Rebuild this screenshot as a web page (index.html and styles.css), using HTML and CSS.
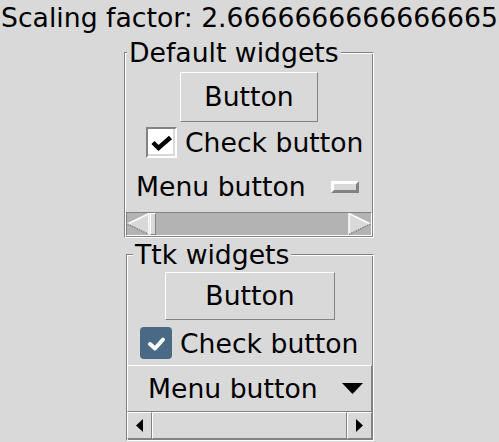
FILE: index.html
```html
<!DOCTYPE html>
<html>
  <head>
    <title>Scaling factor</title>
    <link rel="stylesheet" href="styles.css">
  </head>
  <body>
    <div class="title">Scaling factor: 2.6666666666666665</div>

    <fieldset class="group classic">
      <legend>Default widgets</legend>
      <div class="tk-button">Button</div>
      <div class="check-row">
        <span class="tk-check">
          <svg width="27" height="27" viewBox="0 0 27 27"><polyline points="5,13.5 10.5,19 22.5,8.5" fill="none" stroke="#000" stroke-width="4.5"/></svg>
        </span>
        <span>Check button</span>
      </div>
      <div class="menu-row">
        <span>Menu button</span>
        <span class="indicator"></span>
      </div>
      <div class="tk-scrollbar">
        <svg class="tk-arrow" width="23" height="22" viewBox="0 0 23 22">
          <polygon points="0.5,11 22,0.5 22,21.5" fill="#d9d9d9"/>
          <line x1="0.5" y1="11" x2="22" y2="0.5" stroke="#fff" stroke-width="1.5"/>
          <line x1="0.5" y1="11" x2="22" y2="21.5" stroke="#828282" stroke-width="1.5" stroke-dasharray="1.5 1"/>
          <line x1="22" y1="0" x2="22" y2="22" stroke="#fff" stroke-width="1.5"/>
        </svg>
        <span class="tk-slider"></span>
        <span class="tk-trough"></span>
        <svg class="tk-arrow" width="23" height="22" viewBox="0 0 23 22">
          <polygon points="1,0.5 22.5,11 1,21.5" fill="#d9d9d9"/>
          <line x1="1" y1="0" x2="1" y2="22" stroke="#fff" stroke-width="1.5"/>
          <line x1="1" y1="0.5" x2="22.5" y2="11" stroke="#fff" stroke-width="1.5"/>
          <line x1="22.5" y1="11" x2="1" y2="21.5" stroke="#828282" stroke-width="1.5" stroke-dasharray="1.5 1"/>
        </svg>
      </div>
    </fieldset>

    <fieldset class="group ttk">
      <legend>Ttk widgets</legend>
      <div class="ttk-button">Button</div>
      <div class="check-row ttk-check-row">
        <span class="ttk-check">
          <svg width="32" height="32" viewBox="0 0 32 32"><polyline points="10,17 15,21.5 23,12.5" fill="none" stroke="#fff" stroke-width="4" stroke-linecap="round" stroke-linejoin="round"/></svg>
        </span>
        <span>Check button</span>
      </div>
      <div class="ttk-menu">
        <span>Menu button</span>
        <svg width="21" height="11" viewBox="0 0 21 11"><polygon points="0,0 21,0 10.5,11" fill="#000"/></svg>
      </div>
      <div class="ttk-scrollbar">
        <span class="ttk-arrow">
          <svg width="7" height="13" viewBox="0 0 7 13"><polygon points="7,0 0,6.5 7,13" fill="#000"/></svg>
        </span>
        <span class="ttk-thumb"></span>
        <span class="ttk-arrow">
          <svg width="7" height="13" viewBox="0 0 7 13"><polygon points="0,0 7,6.5 0,13" fill="#000"/></svg>
        </span>
      </div>
    </fieldset>
  </body>
</html>
```

FILE: styles.css
```css
body {
  margin: 0;
  background-color: #d9d9d9;
  color: #000;
  font-family: "DejaVu Sans", sans-serif;
  font-size: 20pt;
  line-height: 31px;
}

.title {
  padding-top: 2px;
  text-align: center;
  white-space: nowrap;
}

/* label frames */
.group {
  box-sizing: border-box;
  min-inline-size: 0;
  margin: 0;
  padding: 0 0 1px;
  border: 1px solid;
  border-color: #828282 #fff #fff #828282;
  box-shadow: inset 1px 1px #fff, inset -1px -1px #828282;
}

.group legend {
  padding: 0 2px;
  background-color: #d9d9d9;
  white-space: nowrap;
}

.classic {
  width: 250px;
  margin: 4px 0 0 124px;
}

.classic legend {
  margin-left: 2px;
}

.ttk {
  width: 248px;
  margin-left: 126px;
}

.ttk legend {
  margin-left: 6px;
  line-height: 33px;
}

/* classic widgets */
.tk-button {
  box-sizing: border-box;
  width: 138px;
  height: 50px;
  margin: 4px auto 0;
  border: 1px solid;
  border-color: #fff #828282 #828282 #fff;
  text-align: center;
  line-height: 48px;
}

.check-row {
  display: flex;
  align-items: center;
  gap: 8px;
  margin-top: 5px;
  padding-left: 21px;
}

.tk-check {
  box-sizing: border-box;
  width: 31px;
  height: 31px;
  border: 2px solid;
  border-color: #828282 #fff #fff #828282;
  background-color: #fff;
  box-shadow: inset -2px -2px #d9d9d9;
}

.tk-check svg {
  display: block;
}

.menu-row {
  display: flex;
  align-items: center;
  padding: 13px 14px 10px 11px;
}

.indicator {
  box-sizing: border-box;
  width: 28px;
  height: 12px;
  margin-left: auto;
  border: 3px solid;
  border-color: #fff #828282 #828282 #fff;
}

.tk-scrollbar {
  box-sizing: border-box;
  display: flex;
  height: 24px;
  margin: 0 1px;
  border: 1px solid;
  border-color: #828282 #fff #fff #828282;
  background-color: #b3b3b3;
}

.tk-arrow {
  display: block;
  flex: none;
}

.tk-slider {
  box-sizing: border-box;
  width: 6px;
  border: 1px solid;
  border-color: #fff #828282 #828282 #fff;
  background-color: #d9d9d9;
}

.tk-trough {
  flex: 1;
}

/* ttk widgets */
.ttk-button {
  box-sizing: border-box;
  width: 170px;
  height: 48px;
  margin: 1px auto 0;
  border: 1px solid;
  border-color: #fff #828282 #828282 #fff;
  text-align: center;
  line-height: 46px;
}

.ttk-check-row {
  margin-top: 7px;
  padding-left: 13px;
}

.ttk-check {
  width: 32px;
  height: 32px;
  border-radius: 4px;
  background-color: #4a6984;
}

.ttk-check svg {
  display: block;
}

.ttk-menu {
  box-sizing: border-box;
  display: flex;
  align-items: center;
  justify-content: space-between;
  height: 47px;
  margin: 6px 1px 0 0;
  padding: 0 8px 0 20px;
  border: 1px solid;
  border-color: #fff #828282 #828282 #fff;
}

.ttk-menu svg {
  display: block;
}

.ttk-scrollbar {
  display: flex;
  height: 27px;
  margin-right: 1px;
}

.ttk-arrow {
  box-sizing: border-box;
  display: flex;
  align-items: center;
  justify-content: center;
  width: 25px;
  border: 1px solid;
  border-color: #fff #828282 #828282 #fff;
}

.ttk-thumb {
  flex: 1;
  border: 1px solid;
  border-color: #fff #828282 #828282 #fff;
}
```
